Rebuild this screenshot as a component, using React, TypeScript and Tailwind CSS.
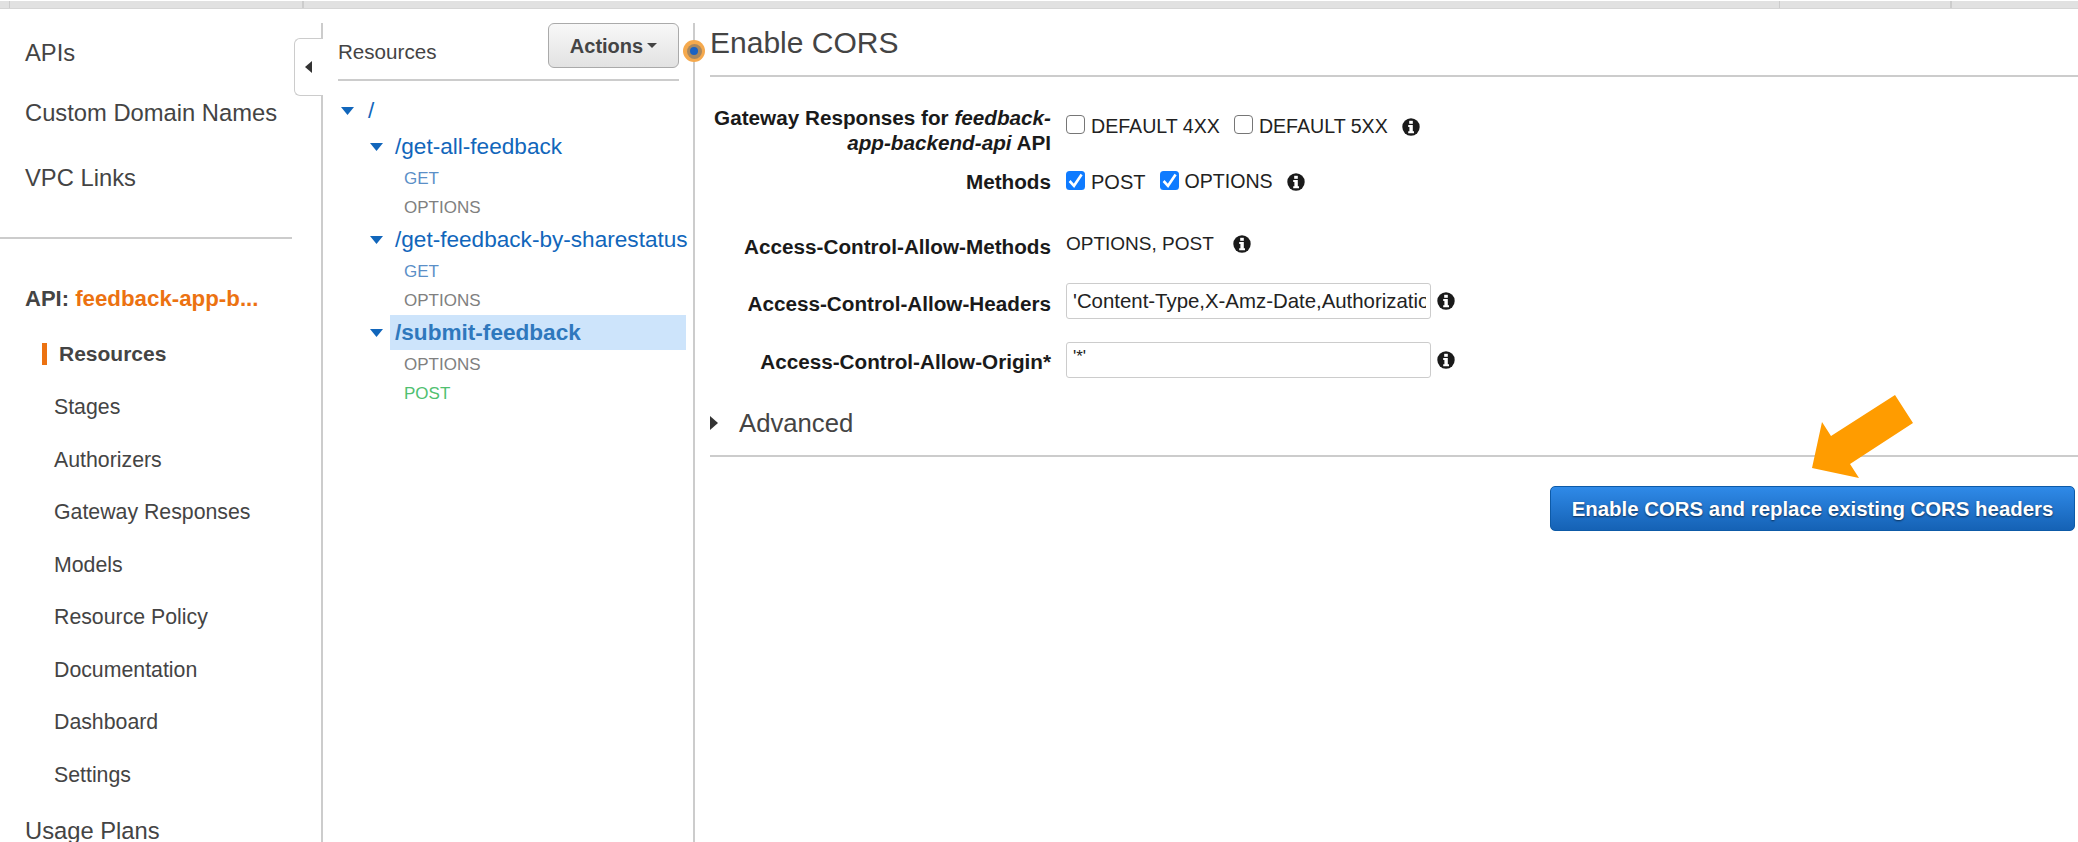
const SUB_ITEMS = ["Stages", "Authorizers", "Gateway Responses", "Models", "Resource Policy", "Documentation", "Dashboard", "Settings"];

function InfoIcon({ className = "" }: { className?: string }) {
  return (
    <svg viewBox="0 0 18 18" className={`w-[18px] h-[18px] shrink-0 ${className}`}>
      <circle cx="9" cy="9" r="8.7" fill="#1a1a1a" />
      <rect x="7.2" y="2.8" width="3.6" height="3" fill="#fff" />
      <path d="M6.2 7h4.6v6.2h1.2v2H6.2v-2h1.2V9H6.2z" fill="#fff" />
    </svg>
  );
}

function Caret() {
  return (
    <svg viewBox="0 0 13 8" className="w-[13px] h-2 shrink-0">
      <path d="M0 0h13L6.5 8z" fill="#1166bb" />
    </svg>
  );
}

function Checkbox({ checked }: { checked?: boolean }) {
  if (checked) {
    return (
      <svg viewBox="0 0 19 19" className="w-[19px] h-[19px] shrink-0 -mt-1">
        <rect width="19" height="19" rx="3.5" fill="#0f7bff" />
        <path d="M3.6 10 8 14.8 15.6 3.6" fill="none" stroke="#fff" strokeWidth="2.6" />
      </svg>
    );
  }
  return <span className="w-[19px] h-[19px] shrink-0 rounded-[4px] border border-[#767676] bg-white" />;
}

function TreeMethod({ name, color }: { name: string; color: string }) {
  return <div className={`h-[29px] pl-[81px] flex items-center text-[17px] ${color}`}>{name}</div>;
}

function TreeResource({ path, active }: { path: string; active?: boolean }) {
  return (
    <div className="h-[35px] flex items-center pl-[47px]">
      <Caret />
      <div className={`ml-[7px] flex-1 h-full flex items-center pl-[5px] text-[22.6px] whitespace-nowrap ${active ? "bg-[#cde4fb] font-bold text-[#2f78bd]" : "text-[#1166bb]"}`}>{path}</div>
    </div>
  );
}

function FormRow({ label, className, children }: { label: React.ReactNode; className: string; children: React.ReactNode }) {
  return (
    <div className={`flex ${className}`}>
      <div className="w-[341px] shrink-0 text-right font-bold text-[20.7px] leading-[24.5px] text-[#1a1a1a]">{label}</div>
      <div className="ml-[15px] flex items-center self-start text-[19.6px] text-[#222]">{children}</div>
    </div>
  );
}

export default function App() {
  return (
    <div className="w-[2078px] h-[842px] overflow-hidden bg-white relative font-['Liberation_Sans',Arial,sans-serif] text-[#444]">
      <div className="h-2 mt-px flex bg-[#e1e1e1] border-b border-[#d5d5d5]">
        <div className="w-[10px] border-r border-[#ccc]" />
        <div className="w-[294px] border-r-2 border-[#ccc]" />
        <div className="w-[1476px] border-r border-[#ccc]" />
        <div className="w-[172px] border-r-2 border-[#ccc]" />
      </div>
      <div className="flex h-[833px] pt-[14px]">
        <aside className="w-[323px] shrink-0 border-r-2 border-[#ccc] relative">
          <div className="pl-[25px] w-[293px] text-[23.75px] text-[#444]">
            <div className="h-[60px] flex items-center">APIs</div>
            <div className="h-[60px] flex items-center whitespace-nowrap">Custom Domain Names</div>
            <div className="h-[70px] flex items-center">VPC Links</div>
          </div>
          <div className="w-[292px] h-0.5 bg-[#ccc] mt-[24px]" />
          <div className="pl-[25px] mt-[43px] text-[22px] leading-[33px] font-bold">
            API: <span className="text-[#ec7211] text-[22.3px]">feedback-app-b...</span>
          </div>
          <div className="mt-[28px] ml-[42px] h-[22px] border-l-[5px] border-[#ec7211] pl-3 flex items-center text-[21px] font-bold">Resources</div>
          <div className="mt-[17px] pl-[54px]">
            {SUB_ITEMS.map((item) => (
              <div key={item} className="h-[52.5px] flex items-center text-[21.3px]">{item}</div>
            ))}
          </div>
          <div className="pl-[25px] pt-[11px] text-[23.75px]">Usage Plans</div>
          {/* collapse tab */}
          <div className="absolute top-[15px] right-[-2px] w-[29px] h-[58px] bg-white border border-r-0 border-[#ccc] rounded-l-md flex items-center pl-[10px]">
            <svg viewBox="0 0 7 12" className="w-[7px] h-3"><path d="M7 0v12L0 6z" fill="#333" /></svg>
          </div>
        </aside>

        <section className="w-[372px] shrink-0 border-r-2 border-[#ccc]">
          <div className="ml-[15px] mr-[14px] h-[58px] border-b-2 border-[#ccc] flex items-start justify-between">
            <span className="mt-[14px] text-[20.6px] text-[#444]">Resources</span>
            <button className="w-[131px] h-[45px] rounded-md border border-[#aaa] bg-gradient-to-b from-[#f8f8f8] to-[#e2e2e2] font-bold text-[20px] text-[#444] flex items-center justify-center gap-1">
              Actions
              <svg viewBox="0 0 10 5" className="w-[10px] h-[5px]"><path d="M0 0h10L5 5z" fill="#444" /></svg>
            </button>
          </div>
          <div className="mt-[12px] mr-[7px]">
            <div className="h-[36px] flex items-center pl-[18px] text-[22.6px] text-[#1166bb]">
              <Caret /><span className="ml-[14px]">/</span>
            </div>
            <TreeResource path="/get-all-feedback" />
            <TreeMethod name="GET" color="text-[#5b8fc7]" />
            <TreeMethod name="OPTIONS" color="text-[#808080]" />
            <TreeResource path="/get-feedback-by-sharestatus" />
            <TreeMethod name="GET" color="text-[#5b8fc7]" />
            <TreeMethod name="OPTIONS" color="text-[#808080]" />
            <TreeResource path="/submit-feedback" active />
            <TreeMethod name="OPTIONS" color="text-[#808080]" />
            <TreeMethod name="POST" color="text-[#50c070]" />
          </div>
        </section>

        <main className="flex-1 pl-[15px]">
          <h1 className="h-[54px] border-b-2 border-[#ccc] text-[30px] leading-[40px] text-[#444]">Enable CORS</h1>
          <FormRow label={<>Gateway Responses for <i>feedback-app-backend-api</i> API</>} className="mt-[29px] h-[49px]">
            <div className="h-[36px] flex items-center">
              <Checkbox /><span className="ml-[6px] mt-[6px] whitespace-nowrap">DEFAULT 4XX</span>
              <span className="ml-[14px]" /><Checkbox /><span className="ml-[6px] mt-[6px] whitespace-nowrap">DEFAULT 5XX</span>
              <span className="ml-[14px]" /><InfoIcon className="mt-[6px]" />
            </div>
          </FormRow>
          <FormRow label="Methods" className="mt-[15px] h-[24px]">
            <div className="h-[24px] flex items-center">
              <Checkbox checked /><span className="ml-[6px] text-[20px]">POST</span>
              <span className="ml-[15px]" /><Checkbox checked /><span className="ml-[5px]">OPTIONS</span>
              <span className="ml-[14px]" /><InfoIcon />
            </div>
          </FormRow>
          <FormRow label="Access-Control-Allow-Methods" className="mt-[41px] h-[24px]">
            <div className="h-[24px] pb-[6px] flex items-center text-[19px]">
              <span>OPTIONS, POST</span>
              <span className="ml-[19px]" /><InfoIcon />
            </div>
          </FormRow>
          <FormRow label={<span className="leading-[42px]">Access-Control-Allow-Headers</span>} className="mt-[24px] h-[36px]">
            <input readOnly value="'Content-Type,X-Amz-Date,Authorization,X-Api-Key,X-Amz-Security-Token'" className="w-[365px] h-[36px] border border-[#ccc] rounded-[3px] pl-[6px] pr-[4px] text-[20.4px] text-[#222] outline-none" />
            <span className="ml-[6px]" /><InfoIcon />
          </FormRow>
          <FormRow label={<span className="leading-[40px]">Access-Control-Allow-Origin*</span>} className="mt-[23px] h-[36px]">
            <input readOnly value="'*'" className="w-[365px] h-[36px] border border-[#ccc] rounded-[3px] pl-[6px] pb-[6px] text-[17px] text-[#222] outline-none" />
            <span className="ml-[6px]" /><InfoIcon />
          </FormRow>
          <div className="mt-[28px] flex items-center h-[34px]">
            <svg viewBox="0 0 8 14" className="w-2 h-[14px]"><path d="M0 0l8 7-8 7z" fill="#333" /></svg>
            <span className="ml-[21px] text-[25.7px] text-[#444]">Advanced</span>
          </div>
          <div className="h-0.5 bg-[#ccc] mt-[15px]" />
          <div className="mt-[29px] flex justify-end pr-[3px]">
            <button className="w-[525px] h-[45px] pt-px rounded-[5px] border border-[#0d5aa7] bg-gradient-to-b from-[#2f8ae8] to-[#1562b5] text-white font-bold text-[20.4px] [text-shadow:0_1px_2px_rgba(0,0,0,0.6)]">Enable CORS and replace existing CORS headers</button>
          </div>
        </main>
      </div>

      {/* recorded cursor dot */}
      <div className="absolute left-[683px] top-[40px] w-[22px] h-[22px] rounded-full bg-[#f5a94d] flex items-center justify-center">
        <div className="w-[15px] h-[15px] rounded-full bg-[#a9885f] flex items-center justify-center">
          <div className="w-[8px] h-[8px] rounded-full bg-[#1a62c4]" />
        </div>
      </div>

      {/* annotation arrow */}
      <svg className="absolute left-[1810px] top-[393px] w-[105px] h-[87px]" viewBox="1810 393 105 87">
        <path d="M1895 395 1913 423 1850 464 1859 478 1812 468 1822 422 1831 436z" fill="#ff9c00" />
      </svg>
    </div>
  );
}
